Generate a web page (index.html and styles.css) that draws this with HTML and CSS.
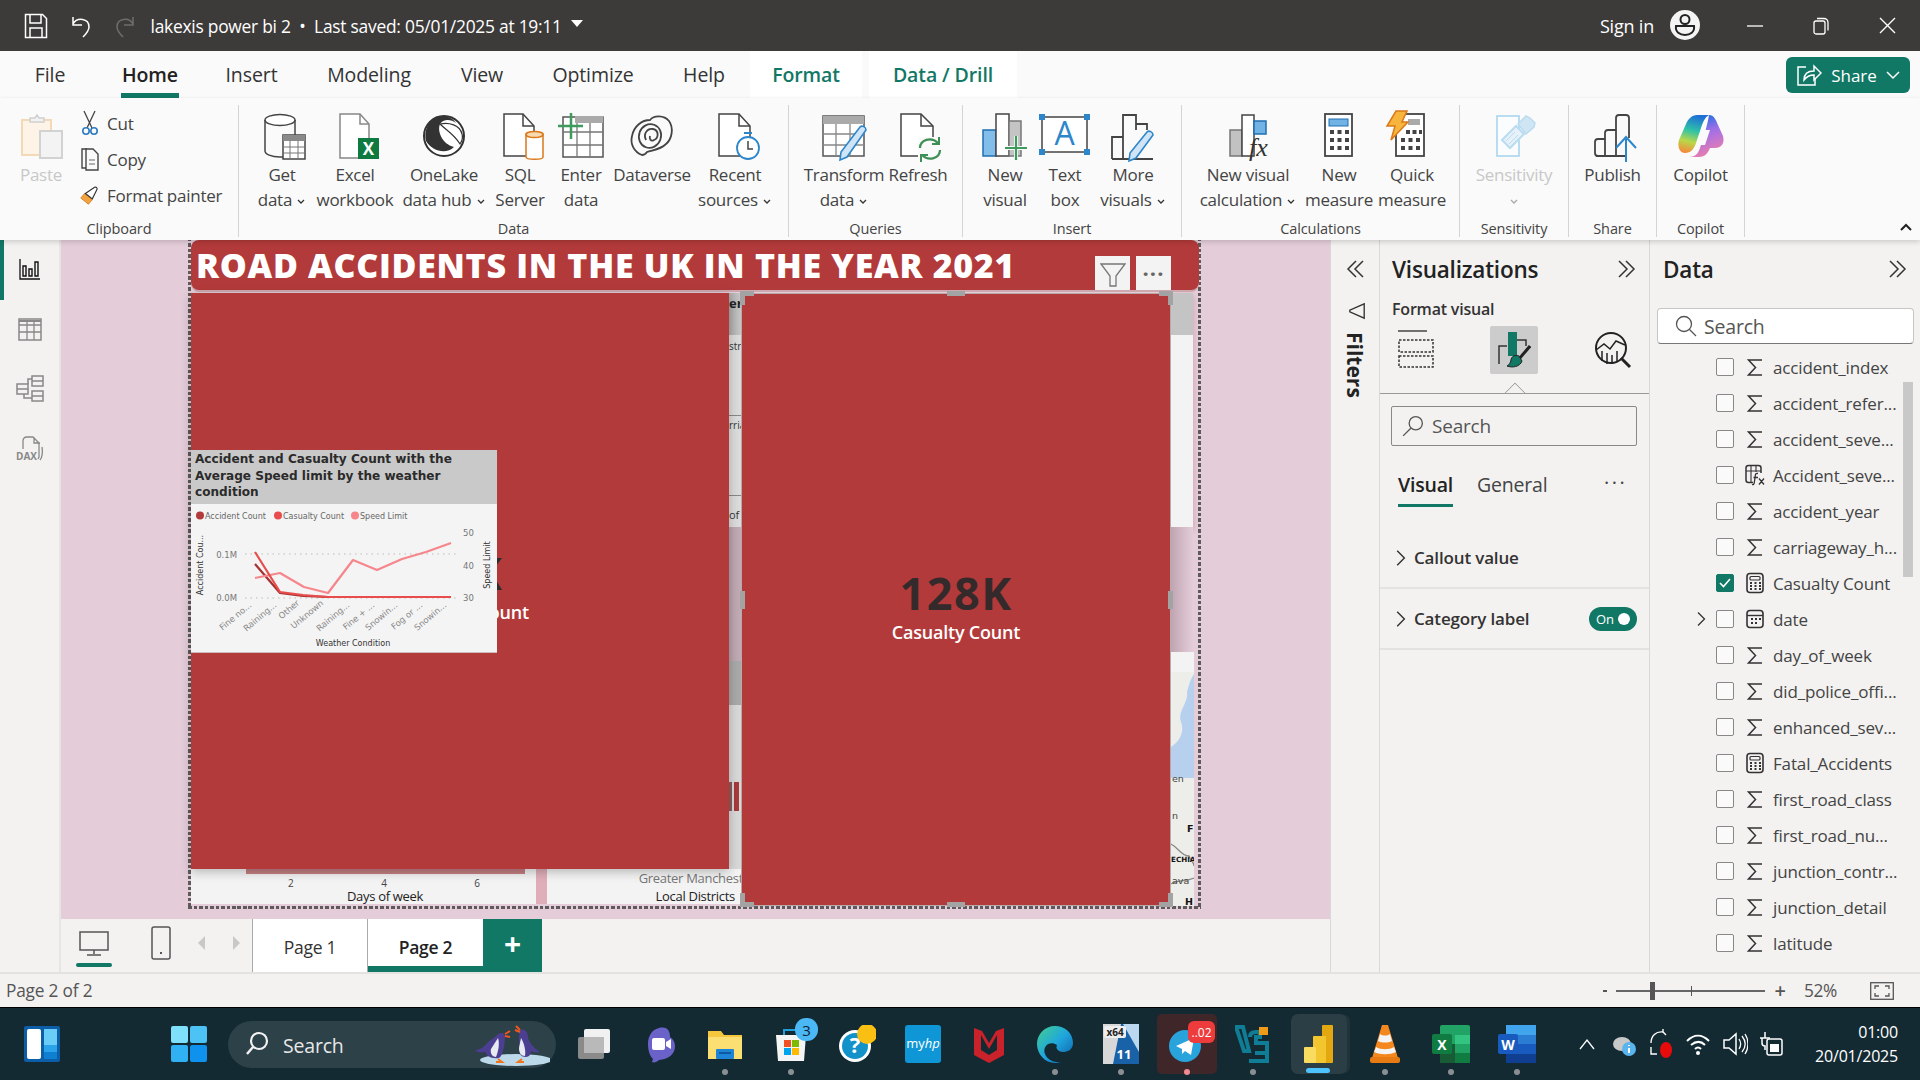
FILE: index.html
```html
<!DOCTYPE html>
<html lang="en">
<head>
<meta charset="utf-8">
<title>lakexis power bi 2</title>
<link rel="stylesheet" href="styles.css">
</head>
<body>
<svg class="defs" width="0" height="0">
  <symbol id="sigma" viewBox="0 0 22 22"><path d="M18 4H4.500l7 7.500-7 7.500H18" fill="none" stroke="#333" stroke-width="1.500"/></symbol>
  <symbol id="calc" viewBox="0 0 22 22"><rect x="3" y="1.500" width="16" height="19" rx="3" fill="none" stroke="#333" stroke-width="1.600"/><rect x="6" y="4.500" width="10" height="3.500" rx="1" fill="none" stroke="#333" stroke-width="1.200"/><path d="M6 11h2m2.500 0h2m2.500 0h2M6 14h2m2.500 0h2m2.500 0h2M6 17h2m2.500 0h2m2.500 0h2" stroke="#333" stroke-width="1.800"/></symbol>
  <symbol id="cal" viewBox="0 0 22 22"><rect x="3" y="2.500" width="16" height="17" rx="3" fill="none" stroke="#333" stroke-width="1.600"/><path d="M3 7.500h16" stroke="#333" stroke-width="1.400"/><path d="M7 11h2m2 0h2m2 0h2M7 15h2m2 0h2" stroke="#333" stroke-width="1.800"/></symbol>
  <symbol id="tfx" viewBox="0 0 22 22"><rect x="2" y="1.500" width="15" height="17" rx="2.500" fill="none" stroke="#333" stroke-width="1.500"/><path d="M7 2v16M12 2v6M2 7h15" stroke="#333" stroke-width="1.100"/><rect x="9" y="9" width="13" height="13" fill="#f3f2f1"/><path d="M14 9.500c-2-.5-2.500.5-2.700 2l-1 7c-.2 1.500-.8 2.500-2.300 2M9.500 13.500h4.500M15 14.500l5 6M20 14.500l-5 6" fill="none" stroke="#333" stroke-width="1.300"/></symbol>
  <symbol id="chev" viewBox="0 0 10 16"><path d="M2 1.500l6.500 6.500-6.500 6.500" fill="none" stroke="#333" stroke-width="1.300"/></symbol>
  <symbol id="dchev" viewBox="0 0 22 20"><path d="M3 2l8 8-8 8M10 2l8 8-8 8" fill="none" stroke="#333" stroke-width="1.500"/></symbol>
  <symbol id="down" viewBox="0 0 10 8"><path d="M2 2l3 3 3-3" fill="none" stroke="#333" stroke-width="1.300"/></symbol>
</svg>
<div class="app">
  <header class="titlebar">
    <div class="tb-left">
      <span class="tb-ic"><svg width="24" height="26" viewBox="0 0 24 26"><path d="M1.500 1.500h17l4 4v19h-21z" fill="none" stroke="#fff" stroke-width="1.500"/><path d="M6 2v8h11V2M6 24.500V15h12v9.500" fill="none" stroke="#fff" stroke-width="1.500"/></svg></span>
      <span class="tb-ic"><svg width="24" height="26" viewBox="0 0 24 26"><path d="M4 4v8h9M4 11c4-7 16-6 16 3 0 4-3 7-6 10" fill="none" stroke="#fff" stroke-width="1.500"/></svg></span>
      <span class="tb-ic"><svg width="24" height="26" viewBox="0 0 24 26"><path d="M20 4v8h-9M20 11c-4-7-16-6-16 3 0 4 3 7 6 10" fill="none" stroke="#6f6e6c" stroke-width="1.500"/></svg></span>
      <span class="tb-title">lakexis power bi 2 &nbsp;•&nbsp; Last saved: 05/01/2025 at 19:11</span>
      <span class="tb-tri"></span>
    </div>
    <div class="tb-right">
      <span class="signin">Sign in</span>
      <span class="avatar"><svg width="30" height="30" viewBox="0 0 30 30"><circle cx="15" cy="15" r="15" fill="#f4f4f4"/><circle cx="15" cy="9.500" r="4.500" fill="none" stroke="#222" stroke-width="2"/><path d="M6 16h18c1 6-4 9-9 9s-10-3-9-9z" fill="none" stroke="#222" stroke-width="2"/></svg></span>
      <span class="win"><svg width="16" height="16" viewBox="0 0 16 16"><path d="M0 8h16" stroke="#fff" stroke-width="1.300"/></svg></span>
      <span class="win"><svg width="16" height="18" viewBox="0 0 16 18"><rect x="1" y="4" width="11" height="13" rx="2" fill="none" stroke="#fff" stroke-width="1.300"/><path d="M4 1.500h7c2 0 4 1.500 4 4v8" fill="none" stroke="#fff" stroke-width="1.300"/></svg></span>
      <span class="win"><svg width="17" height="17" viewBox="0 0 17 17"><path d="M1 1l15 15M16 1L1 16" stroke="#fff" stroke-width="1.400"/></svg></span>
    </div>
  </header>

  <nav class="tabs">
    <span class="tab t-file">File</span>
    <span class="tab t-home active">Home</span>
    <span class="tab t-insert">Insert</span>
    <span class="tab t-model">Modeling</span>
    <span class="tab t-view">View</span>
    <span class="tab t-opt">Optimize</span>
    <span class="tab t-help">Help</span>
    <span class="tab ctx t-format">Format</span>
    <span class="tab ctx t-drill">Data / Drill</span>
    <span class="share"><svg width="26" height="24" viewBox="0 0 26 24"><path d="M10 4H2v18h17v-6" fill="none" stroke="#fff" stroke-width="1.500"/><path d="M8 17c0-6 4-9 10-9V3l7 7-7 7v-5c-4 0-7 1-10 5z" fill="none" stroke="#fff" stroke-width="1.500"/></svg><span class="share-t">Share</span><svg width="14" height="10" viewBox="0 0 14 10"><path d="M1 2l6 6 6-6" fill="none" stroke="#fff" stroke-width="1.500"/></svg></span>
  </nav>

  <section class="ribbon">
    <div class="group g-clip">
      <div class="clip-row">
        <div class="item i-paste disabled">
          <svg class="ri" width="48" height="48" viewBox="0 0 48 48"><rect x="5" y="8" width="29" height="35" fill="#fdf3e6" stroke="#f4d9b6" stroke-width="2"/><path d="M13 9V6h5l2-3 2 3h5v4H13z" fill="#f2f2f2" stroke="#cfcfcf" stroke-width="1.500"/><rect x="23" y="19" width="22" height="27" fill="#f3f3f3" stroke="#d2d2d2" stroke-width="2"/></svg>
          <span class="lbl">Paste</span>
        </div>
        <div class="clip-list">
          <div class="clip-i"><svg width="20" height="26" viewBox="0 0 20 26"><path d="M4 1l8 17M15 1L7 18" stroke="#444" stroke-width="1.300"/><circle cx="6" cy="21" r="3.200" fill="none" stroke="#2d7cc0" stroke-width="1.600"/><circle cx="14" cy="21" r="3.200" fill="none" stroke="#2d7cc0" stroke-width="1.600"/></svg><span>Cut</span></div>
          <div class="clip-i"><svg width="20" height="26" viewBox="0 0 20 26"><path d="M7 3H2v19h4" fill="none" stroke="#444" stroke-width="1.400"/><path d="M6 3h7l5 5v16H6z" fill="#fafafa" stroke="#444" stroke-width="1.400"/><path d="M9 14h6M9 18h6" stroke="#666"/></svg><span>Copy</span></div>
          <div class="clip-i"><svg width="26" height="26" viewBox="0 0 26 26"><path d="M6 11l10 8-5 6-10-8z" fill="#f3a33d" stroke="#c8741e"/><path d="M7 11L19 3c2-1 4 1 3 3l-6 12z" fill="#fff" stroke="#333" stroke-width="1.500"/></svg><span>Format painter</span></div>
        </div>
      </div>
      <span class="cap">Clipboard</span>
    </div>

    <div class="group g-data">
      <div class="items">
        <div class="item w64">
          <svg class="ri sh7" width="48" height="48" viewBox="0 0 48 48"><ellipse cx="15" cy="8" rx="15" ry="5.500" fill="#fff" stroke="#444" stroke-width="1.500"/><path d="M0 8v31c0 3 6 6 15 6h4M30 8v15" fill="none" stroke="#444" stroke-width="1.500"/><rect x="18" y="23" width="22" height="24" fill="#fff" stroke="#444" stroke-width="1.500"/><rect x="18" y="23" width="22" height="6" fill="#8a8a8a"/><path d="M18 35h22M18 41h22M25 29v18M33 29v18" stroke="#777"/></svg>
          <span class="lbl">Get<br>data <svg class="dn"><use href="#down"/></svg></span>
        </div>
        <div class="item w82">
          <svg class="ri" width="48" height="48" viewBox="0 0 48 48"><path d="M9 2h20l9 10v34H9z" fill="#fff" stroke="#888" stroke-width="1.500"/><path d="M29 2v10h9" fill="none" stroke="#888" stroke-width="1.500"/><rect x="27" y="26" width="21" height="21" fill="#0e7a3f"/><text class="gx" x="37.500" y="43">X</text></svg>
          <span class="lbl">Excel<br>workbook</span>
        </div>
        <div class="item w96">
          <svg class="ri" width="48" height="48" viewBox="0 0 48 48"><circle cx="24" cy="24" r="20" fill="#fff" stroke="#333" stroke-width="2"/><path d="M14 6c6-4 18-2 22 5-5-4-13-4-16 1-3 7 2 20 14 23-8 8-22 4-28-6C4 20 7 11 14 6z" fill="#333"/><path d="M20 12c9-2 20 1 22 10 1 3 0 7-2 10-6-10-14-14-20-20z" fill="#fff" stroke="#333" stroke-width="1.200"/></svg>
          <span class="lbl">OneLake<br>data hub <svg class="dn"><use href="#down"/></svg></span>
        </div>
        <div class="item w56">
          <svg class="ri" width="48" height="48" viewBox="0 0 48 48"><path d="M8 2h19l11 12v30H8z" fill="#fff" stroke="#444" stroke-width="1.500"/><path d="M27 2v12h11" fill="none" stroke="#444" stroke-width="1.500"/><path d="M30 22c0-2 17-2 17 0v23c0 3-17 3-17 0z" fill="#fff" stroke="#d9791a" stroke-width="1.500"/><ellipse cx="38.500" cy="22.500" rx="8.500" ry="3" fill="#f7d9b0" stroke="#d9791a" stroke-width="1.500"/></svg>
          <span class="lbl">SQL<br>Server</span>
        </div>
        <div class="item w66">
          <svg class="ri" width="48" height="48" viewBox="0 0 48 48"><rect x="6" y="5" width="40" height="40" fill="#fff" stroke="#555" stroke-width="1.500"/><rect x="18" y="4" width="28" height="7" fill="#aaa"/><path d="M6 20h40M6 33h40M20 11v34M33 11v34" stroke="#777" stroke-width="1.300"/><path d="M14 1v26M1 14h25" stroke="#3e9a5d" stroke-width="2.500"/></svg>
          <span class="lbl">Enter<br>data</span>
        </div>
        <div class="item w76">
          <svg class="ri" width="48" height="48" viewBox="0 0 48 48"><g fill="none" stroke="#444" stroke-width="1.800"><path d="M14 43C6 40 2 32 4 24 6 14 14 8 22 8c4-5 14-5 19 1 5 7 3 18-3 23-6 6-14 6-19 8-2 3-4 3-5 3z"/><ellipse cx="22" cy="24" rx="11" ry="12" transform="rotate(20 22 24)"/><path d="M18 28c-3-6 1-12 7-11 6 1 6 9 1 11-3 2-5-1-4-4"/></g></svg>
          <span class="lbl">Dataverse</span>
        </div>
        <div class="item w90">
          <svg class="ri" width="48" height="48" viewBox="0 0 48 48"><path d="M8 2h20l11 12v30H8z" fill="#fff" stroke="#444" stroke-width="1.500"/><path d="M28 2v12h11" fill="none" stroke="#444" stroke-width="1.500"/><circle cx="37" cy="36" r="11" fill="#fff" stroke="#2d86c9" stroke-width="1.800"/><path d="M37 29v8h5" fill="none" stroke="#444" stroke-width="1.500"/><path d="M33 21h8" stroke="#2d86c9" stroke-width="2"/></svg>
          <span class="lbl">Recent<br>sources <svg class="dn"><use href="#down"/></svg></span>
        </div>
      </div>
      <span class="cap">Data</span>
    </div>

    <div class="group g-query">
      <div class="items">
        <div class="item w90">
          <svg class="ri" width="48" height="48" viewBox="0 0 48 48"><rect x="3" y="4" width="41" height="40" fill="#fff" stroke="#555" stroke-width="1.500"/><rect x="3" y="4" width="41" height="8" fill="#aaa"/><path d="M3 22h41M3 33h41M16 12v32M30 12v32" stroke="#888" stroke-width="1.300"/><path d="M40 15c2-2 6 0 6 3L27 45l-7 3 1-8z" fill="#cfe4f6" stroke="#2d86c9" stroke-width="1.600"/></svg>
          <span class="lbl">Transform<br>data <svg class="dn"><use href="#down"/></svg></span>
        </div>
        <div class="item w58">
          <svg class="ri" width="48" height="48" viewBox="0 0 48 48"><path d="M7 2h20l12 12v30H7z" fill="#fff" stroke="#444" stroke-width="1.500"/><path d="M27 2v12h12" fill="none" stroke="#444" stroke-width="1.500"/><rect x="24" y="25" width="24" height="24" fill="#fafafa"/><path d="M26 36c0-8 11-12 18-5M46 38c0 8-11 12-18 5" fill="none" stroke="#3e8f55" stroke-width="2.200"/><path d="M45 25v7h-7M27 50v-7h7" fill="none" stroke="#3e8f55" stroke-width="2"/></svg>
          <span class="lbl">Refresh</span>
        </div>
      </div>
      <span class="cap">Queries</span>
    </div>

    <div class="group g-insert">
      <div class="items">
        <div class="item w60">
          <svg class="ri" width="48" height="48" viewBox="0 0 48 48"><rect x="2" y="18" width="13" height="26" fill="#83bdea" stroke="#1f6fb0" stroke-width="1.500"/><rect x="15" y="2" width="13" height="42" fill="#fff" stroke="#444" stroke-width="1.500"/><rect x="28" y="9" width="12" height="35" fill="#c4c4c4" stroke="#777" stroke-width="1.500"/><path d="M35 24v26M24 36h24" stroke="#fafafa" stroke-width="4"/><path d="M35 24v24M24 36h22" stroke="#3e9a5d" stroke-width="2.200"/></svg>
          <span class="lbl">New<br>visual</span>
        </div>
        <div class="item w60">
          <svg class="ri" width="48" height="48" viewBox="0 0 48 48"><rect x="1" y="5" width="45" height="35" fill="#fff" stroke="#444" stroke-width="1.500"/><path d="M-2 2h6v6h-6zM43 2h6v6h-6zM-2 37h6v6h-6zM43 37h6v6h-6z" fill="#2d86c9"/><text class="ta" x="23.500" y="33">A</text></svg>
          <span class="lbl">Text<br>box</span>
        </div>
        <div class="item w68 more">
          <svg class="ri" width="48" height="48" viewBox="0 0 48 48"><path d="M3 47V25h11M14 47V3h13v15M27 12h11v6M3 47h41" fill="none" stroke="#444" stroke-width="1.800"/><path d="M38 20c2-2 6 0 6 3L27 46l-7 3 1-8z" fill="#cfe4f6" stroke="#2d86c9" stroke-width="1.600"/></svg>
          <span class="lbl">More<br>visuals <svg class="dn"><use href="#down"/></svg></span>
        </div>
      </div>
      <span class="cap">Insert</span>
    </div>

    <div class="group g-calc">
      <div class="items">
        <div class="item w120">
          <svg class="ri" width="48" height="48" viewBox="0 0 48 48"><rect x="6" y="18" width="12" height="26" fill="#c2c2c2" stroke="#777" stroke-width="1.500"/><rect x="18" y="3" width="12" height="41" fill="#fff" stroke="#444" stroke-width="1.500"/><rect x="30" y="9" width="12" height="13" fill="#72b3e6" stroke="#1f6fb0" stroke-width="1.500"/><text class="fx" x="25" y="44">fx</text></svg>
          <span class="lbl">New visual<br>calculation <svg class="dn"><use href="#down"/></svg></span>
        </div>
        <div class="item w62">
          <svg class="ri" width="48" height="48" viewBox="0 0 48 48"><rect x="10" y="2" width="27" height="42" fill="#fff" stroke="#444" stroke-width="1.800"/><rect x="14" y="7" width="19" height="7" fill="#72b3e6" stroke="#1f6fb0"/><path d="M15 20h4m3.500 0h4m3.500 0h4M15 28h4m3.500 0h4m3.500 0h4M15 36h4m3.500 0h4m3.500 0h4" stroke="#444" stroke-width="4"/></svg>
          <span class="lbl">New<br>measure</span>
        </div>
        <div class="item w84">
          <svg class="ri shq" width="48" height="48" viewBox="0 0 48 48"><rect x="14" y="2" width="28" height="42" fill="#fff" stroke="#444" stroke-width="1.800"/><rect x="26" y="7" width="12" height="6" fill="#aaa"/><path d="M24 20h4m2.500 0h4m2.500 0h3M19 28h4m3.500 0h4m3.500 0h4M19 36h4m3.500 0h4m3.500 0h4" stroke="#444" stroke-width="4"/><path d="M14-1h11l-5 11h6L9 28l4-14H5z" fill="#f7b53d" stroke="#d9791a" stroke-width="1.500"/></svg>
          <span class="lbl">Quick<br>measure</span>
        </div>
      </div>
      <span class="cap">Calculations</span>
    </div>

    <div class="group g-sens">
      <div class="items">
        <div class="item wfull disabled">
          <svg class="ri" width="48" height="48" viewBox="0 0 48 48"><path d="M7 4h22v12L29 44H7z" fill="#fafcfe" stroke="#b9dcf0" stroke-width="2"/><path d="M12 28L26 14l8 8-14 14z" fill="#e6f1f9" stroke="#b9dcf0" stroke-width="2"/><path d="M16 29l9-9M19 32l9-9" stroke="#b9dcf0"/><path d="M28 12l8-8 4 2 5 5-1 4-8 7z" fill="#cfe5f3" stroke="#b9dcf0" stroke-width="1.500"/></svg>
          <span class="lbl">Sensitivity<br><svg class="dn dim"><use href="#down"/></svg></span>
        </div>
      </div>
      <span class="cap">Sensitivity</span>
    </div>

    <div class="group g-share">
      <div class="items">
        <div class="item wfull">
          <svg class="ri shp" width="48" height="48" viewBox="0 0 48 48"><path d="M6 44c-2 0-3-1-3-3V30c0-2 1-3 3-3h7v17zM13 44V21c0-2 1-3 3-3h8v26zM24 18V6c0-2 1-3 3-3h7c2 0 3 1 3 3v20M4 44h30" fill="none" stroke="#444" stroke-width="1.800"/><path d="M34 50V27M24 36l10-11 10 11" fill="none" stroke="#2d86c9" stroke-width="2"/></svg>
          <span class="lbl">Publish</span>
        </div>
      </div>
      <span class="cap">Share</span>
    </div>

    <div class="group g-copilot">
      <div class="items">
        <div class="item wfull">
          <svg class="ri" width="48" height="48" viewBox="0 0 48 48">
            <defs>
              <linearGradient id="cpA" x1="0.500" y1="0" x2="0.300" y2="1"><stop offset="0" stop-color="#1f6fd6"/><stop offset=".4" stop-color="#2fc2a8"/><stop offset=".7" stop-color="#b9d84a"/><stop offset="1" stop-color="#f58a3a"/></linearGradient>
              <linearGradient id="cpB" x1="0.400" y1="0" x2="0.700" y2="1"><stop offset="0" stop-color="#1f6fe0"/><stop offset=".4" stop-color="#a06fe8"/><stop offset="1" stop-color="#f47fa8"/></linearGradient>
            </defs>
            <path d="M20 3h12c-4 2-6 7-8 13l-5 15c-2 6-5 10-11 10C3 41 0 35 2 28l7-16c2-5 6-9 11-9z" fill="url(#cpA)"/>
            <path d="M32 3c5 0 7 5 9 10l5 11c2 8-2 12-8 12h-5c-2 5-5 9-11 9H12c6 0 9-3 11-9 1-2 7-20 9-33z" fill="url(#cpB)"/>
            <path d="M26 18h7l-5 15h-7z" fill="#fafafa"/>
          </svg>
          <span class="lbl">Copilot</span>
        </div>
      </div>
      <span class="cap">Copilot</span>
    </div>
    <svg class="collapse" width="14" height="10" viewBox="0 0 14 10"><path d="M2 8l5-5 5 5" fill="none" stroke="#222" stroke-width="2"/></svg>
  </section>

  <main class="main">
    <aside class="rail">
      <span class="rail-i on"><svg width="22" height="22" viewBox="0 0 22 22"><path d="M1 1v20h20" fill="none" stroke="#111" stroke-width="1.300"/><path d="M4 8h3v10H4zM10 11h3v7h-3zM16 4h3v14h-3z" fill="none" stroke="#111" stroke-width="1.400"/></svg></span>
      <span class="rail-i"><svg width="24" height="24" viewBox="0 0 24 24"><rect x="1" y="2" width="22" height="21" fill="none" stroke="#888" stroke-width="1.500"/><path d="M1 8h22M1 15h22M9 3v20M16 3v20" stroke="#888" stroke-width="1.300"/><path d="M1 4h22" stroke="#888" stroke-width="2"/></svg></span>
      <span class="rail-i"><svg width="28" height="28" viewBox="0 0 28 28"><g fill="none" stroke="#888" stroke-width="1.500"><rect x="1" y="9" width="11" height="10"/><rect x="16" y="1" width="11" height="10"/><rect x="16" y="16" width="11" height="10"/><path d="M1 14h11M16 6h11M16 21h11M12 9V4h4M8 19v4h8"/></g></svg></span>
      <span class="rail-i"><svg width="28" height="28" viewBox="0 0 28 28"><path d="M7 14V6c0-2 1-4 4-4h6l6 6v14l-1 2M18 2v6h6M26 12c1 5 0 11-2 13" fill="none" stroke="#888" stroke-width="1.300"/><text class="dax" x="0" y="25">DAX</text></svg></span>
    </aside>

    <div class="center">
      <div class="canvas">
        <div class="report">
          <div class="under gapcol">
            <div class="gc-head"></div>
            <div class="gc-list"><span class="gc-t gc-1">str</span><i class="gc-line"></i><span class="gc-t gc-2">rria</span><i class="gc-line l2"></i><span class="gc-t gc-3">of</span></div>
            <div class="gc-pink"></div>
            <div class="gc-grey"></div>
            <div class="gc-low"><i class="gc-bar"></i><i class="gc-bar b2"></i></div>
          </div>
          <span class="under gc-er">er</span>
          <div class="under rt-top"></div>
          <div class="under rt-pink"></div>
          <div class="under rt-map">
            <svg width="23" height="254" viewBox="0 0 23 254"><rect width="23" height="20" fill="#f3f3f3"/><rect y="20" width="23" height="234" fill="#ededea"/><path d="M23 22v104H0V95c8-5 14-15 10-25-4-10 8-20 6-30 2-8 4-14 7-18z" fill="#b7d0ee"/><path d="M0 192c8 4 10 12 18 12 2 6 5 6 5 10M0 232c6-4 12-2 23-6" fill="none" stroke="#8a8a86" stroke-width="1.300"/><text class="mp" x="1" y="130">en</text><text class="mp" x="1" y="167">n</text><text class="mp b" x="16" y="180">F</text><text class="mp b sm" x="0" y="210">ECHIA</text><text class="mp" x="1" y="232">ava</text><text class="mp b" x="14" y="253">H</text></svg>
          </div>
          <div class="under bt-left">
            <div class="bl-bar"></div>
            <div class="bl-ticks"><span>2</span><span>4</span><span>6</span></div>
            <div class="bl-name">Days of week</div>
          </div>
          <div class="under bt-pink"></div>
          <div class="under bt-mid">
            <div class="bm-a">Greater Manchester</div>
            <div class="bm-b">Local Districts</div>
          </div>

          <div class="banner">
            <h1 class="banner-t">ROAD ACCIDENTS IN THE UK IN THE YEAR 2021</h1>
            <span class="hdr-btn b1"><svg width="26" height="30" viewBox="0 0 26 30"><path d="M1 6h24l-9 12v10h-6V18z" fill="none" stroke="#777" stroke-width="1.300"/></svg></span>
            <span class="hdr-btn b2">···</span>
          </div>

          <div class="card card-l">
            <span class="frag-k">K</span>
            <span class="frag-o">ount</span>
          </div>
          <div class="card card-r">
            <div class="big">128K</div>
            <div class="big-cap">Casualty Count</div>
            <i class="h h-tl"></i><i class="h h-tr"></i><i class="h h-bl"></i><i class="h h-br"></i>
            <i class="h h-t"></i><i class="h h-b"></i><i class="h h-l"></i><i class="h h-r"></i>
          </div>

          <div class="chart">
            <div class="chart-h">Accident and Casualty Count with the Average Speed limit by the weather condition</div>
            <svg class="chart-s" width="306" height="148" viewBox="0 0 306 148">
              <g class="leg">
                <circle cx="9" cy="11.500" r="4" fill="#b33a3a"/><text x="14" y="14.500">Accident Count</text>
                <circle cx="87" cy="11.500" r="4" fill="#e84c4c"/><text x="92" y="14.500">Casualty Count</text>
                <circle cx="164" cy="11.500" r="4" fill="#f6868c"/><text x="169" y="14.500">Speed Limit</text>
              </g>
              <path d="M54 50H268M54 94H268" stroke="#bbb" stroke-dasharray="1.500 4"/>
              <g class="ax"><text x="46" y="54" text-anchor="end">0.1M</text><text x="46" y="97" text-anchor="end">0.0M</text><text x="272" y="32">50</text><text x="272" y="65">40</text><text x="272" y="97">30</text></g>
              <polyline points="64,60 89,89 112,92 137,93 260,93" class="ln l-a"/>
              <polyline points="64,74 89,69 113,83 137,89 162,56 186,66 211,55 235,48 260,39" class="ln l-s"/>
              <polyline points="64,48 89,88 112,91 137,93 162,93 260,93" class="ln l-c"/>
              <g class="xl">
                <text transform="translate(61,102) rotate(-40)">Fine no...</text>
                <text transform="translate(86,102) rotate(-40)">Raining...</text>
                <text transform="translate(109,100) rotate(-40)">Other</text>
                <text transform="translate(133,100) rotate(-40)">Unknown</text>
                <text transform="translate(159,102) rotate(-40)">Raining...</text>
                <text transform="translate(184,102) rotate(-40)">Fine + ...</text>
                <text transform="translate(207,102) rotate(-40)">Snowin...</text>
                <text transform="translate(232,102) rotate(-40)">Fog or ...</text>
                <text transform="translate(256,102) rotate(-40)">Snowin...</text>
              </g>
              <g class="tt">
                <text x="162" y="142" text-anchor="middle">Weather Condition</text>
                <text transform="translate(12,61) rotate(-90)" text-anchor="middle">Accident Cou...</text>
                <text transform="translate(299,61) rotate(-90)" text-anchor="middle">Speed Limit</text>
              </g>
            </svg>
          </div>
        </div>
      </div>
      <div class="pagebar">
        <div class="pb-dev">
          <span class="dev on"><svg width="30" height="28" viewBox="0 0 30 28"><rect x="1" y="3" width="28" height="18" fill="none" stroke="#555" stroke-width="1.500"/><path d="M15 21v4M8 26h14" stroke="#555" stroke-width="1.500"/></svg></span>
          <span class="dev d2"><svg width="20" height="34" viewBox="0 0 20 34"><rect x="1" y="1" width="18" height="32" rx="2" fill="none" stroke="#555" stroke-width="1.500"/><path d="M9 27h2" stroke="#555" stroke-width="2"/></svg></span>
        </div>
        <div class="pb-arrows"><span class="arr l"></span><span class="arr r"></span></div>
        <span class="page p1">Page 1</span>
        <span class="page p2">Page 2</span>
        <span class="page-add">+</span>
      </div>
    </div>

    <aside class="filters">
      <svg class="f-ch" width="22" height="20"><use href="#dchev" transform="translate(22,0) scale(-1,1)"/></svg>
      <svg class="f-fun" width="18" height="18" viewBox="0 0 20 20"><path d="M18 2v16L2 11V9z" fill="none" stroke="#333" stroke-width="1.500"/></svg>
      <span class="f-t">Filters</span>
    </aside>

    <aside class="viz">
      <div class="p-head"><span class="p-title">Visualizations</span><svg width="22" height="20"><use href="#dchev"/></svg></div>
      <div class="fmt-t">Format visual</div>
      <div class="fmt-ic">
        <span class="fi fi1"><svg width="36" height="38" viewBox="0 0 36 38"><path d="M0 1h29" stroke="#444" stroke-width="1.500"/><rect x="1" y="10" width="34" height="12" fill="none" stroke="#333" stroke-width="1.500" stroke-dasharray="2.500 1.500"/><rect x="1" y="26" width="34" height="11" fill="none" stroke="#333" stroke-width="1.500" stroke-dasharray="2.500 1.500"/></svg></span>
        <span class="fi fi2"><svg width="34" height="38" viewBox="0 0 34 38"><path d="M2 33V15h8" fill="none" stroke="#333" stroke-width="1.500"/><rect x="11" y="1" width="9" height="24" fill="#117865"/><path d="M20 9h9v6" fill="none" stroke="#333" stroke-width="1.500"/><path d="M33 15L22 28" stroke="#222" stroke-width="3"/><path d="M22 25c-4-2-8 1-8 4-.5 3-2 5-4 6 5 2 13 1 15-5z" fill="#117865" stroke="#222"/></svg></span>
        <span class="fi fi3"><svg width="38" height="38" viewBox="0 0 38 38"><circle cx="17" cy="17" r="15" fill="none" stroke="#222" stroke-width="2"/><path d="M2 19l8-6 6 5 6-8 9 4" fill="none" stroke="#222" stroke-width="1.500"/><path d="M8 20v10M13 22v11M18 24v9M23 20v11" stroke="#222" stroke-width="1.500"/><path d="M27 27l9 9" stroke="#222" stroke-width="3"/></svg></span>
      </div>
      <div class="fmt-line"><i class="caret"></i></div>
      <div class="v-search"><svg width="22" height="22" viewBox="0 0 20 20"><circle cx="12.500" cy="7.500" r="6" fill="none" stroke="#555" stroke-width="1.200"/><path d="M8 12l-7 7" stroke="#555" stroke-width="1.200"/></svg><span>Search</span></div>
      <div class="v-tabs"><span class="vt on">Visual</span><span class="vt">General</span><span class="vt-more">···</span></div>
      <div class="acc first"><svg class="ac-ch" width="11" height="18"><use href="#chev"/></svg><span>Callout value</span></div>
      <div class="acc"><svg class="ac-ch" width="11" height="18"><use href="#chev"/></svg><span>Category label</span><span class="toggle"><span class="tg-t">On</span><i class="tg-k"></i></span></div>
    </aside>

    <aside class="data">
      <div class="p-head d-head"><span class="p-title">Data</span><svg width="22" height="20"><use href="#dchev"/></svg></div>
      <div class="d-search"><svg width="22" height="22" viewBox="0 0 22 22"><circle cx="9" cy="9" r="7.500" fill="none" stroke="#555" stroke-width="1.300"/><path d="M14.500 14.500l6.500 6.500" stroke="#555" stroke-width="1.300"/></svg><span>Search</span></div>
      <div class="rows">
        <div class="row"><i class="cb"></i><svg class="ricon"><use href="#sigma"/></svg><span>accident_index</span></div>
        <div class="row"><i class="cb"></i><svg class="ricon"><use href="#sigma"/></svg><span>accident_refer...</span></div>
        <div class="row"><i class="cb"></i><svg class="ricon"><use href="#sigma"/></svg><span>accident_seve...</span></div>
        <div class="row"><i class="cb"></i><svg class="ricon"><use href="#tfx"/></svg><span>Accident_seve...</span></div>
        <div class="row"><i class="cb"></i><svg class="ricon"><use href="#sigma"/></svg><span>accident_year</span></div>
        <div class="row"><i class="cb"></i><svg class="ricon"><use href="#sigma"/></svg><span>carriageway_h...</span></div>
        <div class="row"><i class="cb ck"><svg width="14" height="12" viewBox="0 0 14 12"><path d="M2 6l3.500 3.500L12 2" fill="none" stroke="#fff" stroke-width="1.600"/></svg></i><svg class="ricon"><use href="#calc"/></svg><span>Casualty Count</span></div>
        <div class="row"><svg class="expand" width="10" height="16"><use href="#chev"/></svg><i class="cb"></i><svg class="ricon"><use href="#cal"/></svg><span>date</span></div>
        <div class="row"><i class="cb"></i><svg class="ricon"><use href="#sigma"/></svg><span>day_of_week</span></div>
        <div class="row"><i class="cb"></i><svg class="ricon"><use href="#sigma"/></svg><span>did_police_offi...</span></div>
        <div class="row"><i class="cb"></i><svg class="ricon"><use href="#sigma"/></svg><span>enhanced_sev...</span></div>
        <div class="row"><i class="cb"></i><svg class="ricon"><use href="#calc"/></svg><span>Fatal_Accidents</span></div>
        <div class="row"><i class="cb"></i><svg class="ricon"><use href="#sigma"/></svg><span>first_road_class</span></div>
        <div class="row"><i class="cb"></i><svg class="ricon"><use href="#sigma"/></svg><span>first_road_nu...</span></div>
        <div class="row"><i class="cb"></i><svg class="ricon"><use href="#sigma"/></svg><span>junction_contr...</span></div>
        <div class="row"><i class="cb"></i><svg class="ricon"><use href="#sigma"/></svg><span>junction_detail</span></div>
        <div class="row"><i class="cb"></i><svg class="ricon"><use href="#sigma"/></svg><span>latitude</span></div>
      </div>
      <i class="scroll"></i>
    </aside>
  </main>

  <footer class="status">
    <span class="st-l">Page 2 of 2</span>
    <div class="st-r">
      <span class="z-m"></span>
      <span class="z-track"><i class="z-thumb"></i><i class="z-tick"></i></span>
      <span class="z-p">+</span>
      <span class="z-v">52%</span>
      <svg class="z-fit" width="24" height="18" viewBox="0 0 24 18"><rect x=".7" y=".7" width="22.600" height="16.600" fill="none" stroke="#555" stroke-width="1.300"/><path d="M5 7V4h4M15 4h4v3M5 11v3h4M15 14h4v-3" fill="none" stroke="#555" stroke-width="1.300"/></svg>
    </div>
  </footer>

  <div class="taskbar">
    <span class="tk-w"><svg width="36" height="36" viewBox="0 0 36 36"><rect width="36" height="36" rx="2" fill="#0c5ea8"/><rect x="3" y="3" width="14" height="30" rx="2" fill="#fff"/><rect x="20" y="3" width="13" height="16" fill="#69cdf8"/><rect x="20" y="19" width="13" height="7" fill="#2aa3ea"/><rect x="20" y="26" width="13" height="7" fill="#0f7fd2"/></svg></span>
    <span class="tk-start"><svg width="36" height="36" viewBox="0 0 36 36"><rect width="17" height="17" rx="2" fill="#7fe0fb"/><rect x="19" width="17" height="17" rx="2" fill="#4cc2f5"/><rect y="19" width="17" height="17" rx="2" fill="#2fb1f3"/><rect x="19" y="19" width="17" height="17" rx="2" fill="#0f91ee"/></svg></span>
    <div class="tk-search">
      <svg width="24" height="26" viewBox="0 0 24 26"><circle cx="14" cy="10" r="8" fill="none" stroke="#f2f2f2" stroke-width="2.200"/><path d="M8 16l-6 7" stroke="#f2f2f2" stroke-width="2.500"/></svg>
      <span class="tk-st">Search</span>
      <svg class="peng" width="82" height="42" viewBox="0 0 82 42"><ellipse cx="48" cy="36" rx="36" ry="6" fill="#bcd9ea"/><path d="M28 12c3-4 9-4 9 0 0 8-2 20-6 22-8 1-12-2-14-6-4 1-8 0-10-2 6 0 10-4 13-8z" fill="#4c3f92"/><path d="M30 14c2 6 0 14-2 19-4 0-6-4-5-8z" fill="#e9e9f2"/><path d="M37 10l5-3M37 12l5 1" stroke="#f0571e" stroke-width="2"/><path d="M52 6c5-2 8 2 8 8 2 6 8 12 12 14-4 1-7 0-9-1 0 3-2 6-5 6-5 0-7-3-7-10 0-6 0-14 1-17z" fill="#4c3f92"/><path d="M53 14c3 5 5 12 4 18-4 0-6-3-6-8z" fill="#e9e9f2"/><path d="M52 6l-4-4M52 8l-5-2" stroke="#f0571e" stroke-width="2"/><path d="M30 35l4 3h-6M54 35l-4 3h6" stroke="#f0771e" stroke-width="2" fill="none"/></svg>
    </div>
    <div class="tk-apps">
      <span class="app-i"><svg width="36" height="36" viewBox="0 0 36 36"><rect x="3" y="11" width="26" height="22" rx="2" fill="#8a8a8a"/><rect x="9" y="3" width="26" height="24" rx="2" fill="#f1f1f1"/><rect x="9" y="11" width="20" height="16" fill="#b9b9b9"/></svg></span>
      <span class="app-i"><svg width="38" height="38" viewBox="0 0 38 38"><path d="M8 19C8 12 11 5 19 3c9-2 11 4 11 9 3 2 5 5 5 9 0 9-7 13-16 14-2 2-5 3-7 2l1-3c-3-3-5-8-5-15z" fill="#6a62c9"/><rect x="12" y="13" width="13" height="12" rx="2" fill="#fff"/><path d="M26 17l5-3v10l-5-3z" fill="#fff"/></svg></span>
      <span class="app-i dot"><svg width="38" height="38" viewBox="0 0 38 38"><path d="M2 6h13l3 4h18v24H2z" fill="#f5c73e"/><path d="M2 12h34v22H2z" fill="#fbdf72"/><rect x="10" y="24" width="18" height="10" rx="1" fill="#1d84d8"/><rect x="13" y="27" width="12" height="2" fill="#0d5aa0"/></svg></span>
      <span class="app-i dot"><svg width="38" height="38" viewBox="0 0 38 38"><path d="M4 10h30l-2 26H6z" fill="#f5f5f5"/><path d="M12 10V5h14v5" fill="none" stroke="#1d9fe0" stroke-width="2"/><rect x="12" y="15" width="7" height="7" fill="#f25022"/><rect x="20" y="15" width="7" height="7" fill="#7fba00"/><rect x="12" y="23" width="7" height="7" fill="#00a4ef"/><rect x="20" y="23" width="7" height="7" fill="#ffb900"/></svg><span class="badge b-blue">3</span></span>
      <span class="app-i"><svg width="38" height="38" viewBox="0 0 38 38"><circle cx="17" cy="21" r="16" fill="#fff"/><circle cx="17" cy="21" r="13" fill="#1392c9"/><text class="qm" x="17" y="28">?</text><circle cx="29" cy="9" r="10" fill="#f9bf12"/></svg></span>
      <span class="app-i"><svg width="36" height="38" viewBox="0 0 36 38"><rect width="36" height="38" rx="3" fill="#0e96d6"/><text class="myhp" x="18" y="23">my<tspan font-style="italic">hp</tspan></text></svg></span>
      <span class="app-i"><svg width="30" height="38" viewBox="0 0 30 38"><path d="M0 3l8 3 7 12 7-12 8-3v27l-15 8-15-8z" fill="#c9222a"/><path d="M7 10v15l8 5 8-5V10l-8 14z" fill="#132a32"/></svg></span>
      <span class="app-i dot"><svg width="36" height="38" viewBox="0 0 36 38"><defs><linearGradient id="edg" x1="0" y1="0" x2="1" y2="1"><stop offset="0" stop-color="#43d08f"/><stop offset=".5" stop-color="#1fa6dd"/><stop offset="1" stop-color="#0c5aa6"/></linearGradient></defs><path d="M18 1C28 1 36 8 36 18c0 7-6 9-10 9s-8-3-6-7c-7-5-15 1-12 9 2 5 8 9 16 8-3 1-5 1-6 1C8 38 0 29 0 19 0 9 8 1 18 1z" fill="url(#edg)"/></svg></span>
      <span class="app-i dot"><svg width="36" height="40" viewBox="0 0 36 40"><rect width="36" height="40" fill="#1a62a8"/><path d="M20 0h16v28z" fill="#bcd8f0"/><path d="M0 0h18l-8 40H0z" fill="#d8d8d8"/><rect x="1" y="2" width="22" height="12" rx="2" fill="#eee"/><text class="x64" x="12" y="12">x64</text><text class="x11" x="21" y="35">11</text></svg></span>
      <span class="app-i dot tg"><svg width="38" height="38" viewBox="0 0 38 38"><circle cx="17" cy="21" r="16" fill="#29a3dc"/><path d="M8 21l18-8-3 17-6-4-3 3v-5z" fill="#fff"/></svg><span class="badge b-red">..02</span></span>
      <span class="app-i dot"><svg width="36" height="38" viewBox="0 0 36 38"><path d="M1 2h7l6 24h-5zM14 36h18v-8H20M15 12c0-4 3-5 6-5h4v5h-4v6h11v10" fill="none" stroke="#0f7d96" stroke-width="4"/><path d="M24 2h9v8h-9z" fill="#f09a1a"/></svg></span>
      <span class="app-i pbi"><svg width="30" height="38" viewBox="0 0 30 38"><rect x="18" width="11" height="38" rx="1" fill="#e3a80f"/><rect x="9" y="11" width="13" height="27" rx="1" fill="#f3c62f"/><rect x="0" y="22" width="12" height="16" rx="1" fill="#f9dc5f"/></svg></span>
      <span class="app-i dot"><svg width="30" height="40" viewBox="0 0 30 40"><path d="M12 1h6l10 33H2z" fill="#f5871f"/><path d="M10 10c3 2 7 2 10 0l2 7c-4 2-10 2-14 0zM6 23c5 3 13 3 18 0l2 5c-6 3-16 3-22 0z" fill="#f4f4f4"/><rect y="33" width="30" height="6" rx="2" fill="#e87a14"/></svg></span>
      <span class="app-i dot"><svg width="38" height="38" viewBox="0 0 38 38"><rect x="8" width="30" height="38" rx="2" fill="#21a366"/><rect x="23" y="10" width="15" height="9" fill="#33c481"/><rect x="23" y="28" width="15" height="10" fill="#107c41"/><rect x="8" y="19" width="15" height="19" fill="#185c37"/><rect y="9" width="20" height="20" rx="2" fill="#107c41"/><text class="tw" x="10" y="25">X</text></svg></span>
      <span class="app-i dot"><svg width="38" height="38" viewBox="0 0 38 38"><rect x="8" width="30" height="38" rx="2" fill="#2b7cd3"/><rect x="8" width="30" height="10" fill="#41a5ee"/><rect x="8" y="19" width="30" height="10" fill="#185abd"/><rect x="8" y="29" width="30" height="9" fill="#103f91"/><rect y="9" width="20" height="20" rx="2" fill="#185abd"/><text class="tw" x="10" y="25">W</text></svg></span>
    </div>
    <div class="tk-tray">
      <span class="tr-i"><svg width="18" height="12" viewBox="0 0 18 12"><path d="M2 11l7-9 7 9" fill="none" stroke="#fff" stroke-width="1.300"/></svg></span>
      <span class="tr-i"><svg width="26" height="26" viewBox="0 0 26 26"><ellipse cx="11" cy="13" rx="9" ry="7" fill="#c8c8c8"/><circle cx="18" cy="18" r="7" fill="#5ab4ee"/><path d="M18 14v1M18 17v5" stroke="#fff" stroke-width="2"/></svg></span>
      <span class="tr-i"><svg width="26" height="30" viewBox="0 0 26 30"><path d="M3 14C3 7 8 2 15 3l3 3M3 18v7h6M15 3V0" fill="none" stroke="#fff" stroke-width="1.400"/><ellipse cx="18" cy="21" rx="6" ry="8" fill="#e80b0b"/></svg></span>
      <span class="tr-i"><svg width="26" height="24" viewBox="0 0 26 24"><path d="M2 9c7-7 15-7 22 0M6 13c5-4 10-4 14 0M10 17c2-2 4-2 6 0" fill="none" stroke="#fff" stroke-width="2"/><circle cx="13" cy="21" r="2" fill="#fff"/></svg></span>
      <span class="tr-i"><svg width="26" height="24" viewBox="0 0 26 24"><path d="M2 8h5l7-6v20l-7-6H2z" fill="none" stroke="#fff" stroke-width="1.500"/><path d="M17 7c2 3 2 7 0 10M20 4c4 5 4 11 0 16M23 2c4 6 4 14 0 20" fill="none" stroke="#fff" stroke-width="1.300"/></svg></span>
      <span class="tr-i"><svg width="26" height="26" viewBox="0 0 26 26"><path d="M6 1v6M1 7h10M3 7v5c0 2 1 3 3 3v4" fill="none" stroke="#fff" stroke-width="1.500"/><rect x="8" y="8" width="15" height="16" rx="2" fill="#132a32" stroke="#fff" stroke-width="1.500"/><rect x="11" y="13" width="9" height="8" fill="#fff"/></svg></span>
    </div>
    <div class="tk-clock"><span>01:00</span><span>20/01/2025</span></div>
  </div>
</div>
</body>
</html>
```
FILE: styles.css
```css
* { box-sizing: border-box; }
html, body { margin: 0; padding: 0; height: 100%; overflow: hidden; }
body { font-family: "Open Sans", "Noto Sans", sans-serif; color: #333; background: #f3f2f1; }
.defs { position: absolute; }
i { display: block; }
.app { width: 1920px; height: 1080px; display: flex; flex-direction: column; }

/* Title bar */
.titlebar { height: 51px; background: #3d3b39; color: #fff; display: flex; justify-content: space-between; align-items: center; flex: none; }
.tb-left { display: flex; align-items: center; padding-left: 14px; }
.tb-ic { width: 44.500px; display: flex; justify-content: center; }
.tb-title { margin-left: 3px; font-size: 17.400px; letter-spacing: -.25px; white-space: nowrap; }
.tb-tri { margin-left: 9px; margin-top: -4px; width: 0; height: 0; border-left: 6.500px solid transparent; border-right: 6.500px solid transparent; border-top: 7px solid #fff; }
.tb-right { display: flex; align-items: center; }
.signin { font-size: 18px; margin-right: 16px; letter-spacing: -.2px; }
.avatar { display: flex; margin-right: 22px; margin-top: -2px; }
.win { width: 66px; display: flex; justify-content: center; }

/* Tabs */
.tabs { height: 47px; background: #fafafa; display: flex; position: relative; flex: none; align-items: stretch; font-size: 19.500px; color: #333; }
.tab { display: flex; align-items: center; justify-content: center; padding-bottom: 1px; letter-spacing: -.1px; }
.t-file { width: 100px; }
.t-home { width: 100px; font-weight: 600; color: #222; position: relative; }
.t-insert { width: 103px; }
.t-model { width: 128px; margin-left: 2px; }
.t-view { width: 96px; margin-left: 1px; }
.t-opt { width: 126px; }
.t-help { width: 96px; margin-right: 1px; }
.active::after { content: ""; position: absolute; left: 21px; right: 21px; bottom: 0; height: 5px; background: #117865; }
.ctx { background: #fff; color: #117865; font-weight: 600; }
.t-format { width: 112px; margin-left: -3px; }
.t-drill { width: 148px; margin-left: 7px; }
.share { margin-left: auto; margin-right: 10px; margin-top: 6px; width: 124px; height: 36px; background: #117865; border-radius: 6px; color: #fff; display: flex; align-items: center; justify-content: center; gap: 9px; font-size: 17px; }

/* Ribbon */
.ribbon { height: 142px; background: #fafafa; display: flex; padding-top: 7px; padding-bottom: 3px; position: relative; z-index: 3; box-shadow: 0 2px 5px rgba(0,0,0,.16); flex: none; }
.group { display: flex; flex-direction: column; align-items: stretch; height: 132px; border-right: 1px solid #d4d4d4; flex: none; }
.g-clip { width: 239px; }
.g-data { width: 550px; }
.g-query { width: 174px; }
.g-insert { width: 219px; }
.g-calc { width: 278px; }
.g-sens { width: 109px; }
.g-share { width: 88px; }
.g-copilot { width: 88px; }
.items, .clip-row { display: flex; flex: 1; }
.g-data .items { padding-left: 11px; }
.g-query .items { padding-left: 10px; }
.g-insert .items { padding-left: 12px; }
.g-calc .items { padding-left: 6px; }
.item { display: flex; flex-direction: column; align-items: center; padding-top: 7px; flex: none; }
.w56 { width: 56px; } .w58 { width: 58px; } .w60 { width: 60px; } .w62 { width: 62px; } .w64 { width: 64px; } .w66 { width: 66px; } .w68 { width: 68px; } .w76 { width: 76px; } .w82 { width: 82px; } .w84 { width: 84px; } .w90 { width: 90px; } .w96 { width: 96px; } .w120 { width: 120px; }
.wfull { width: 100%; }
.more { margin-left: 4px; }
.ri { overflow: visible; flex: none; }
.sh7 { transform: translateX(7px); }
.shq { transform: translateX(-6px); }
.shp { transform: translateX(3px); }
.lbl { margin-top: 2px; font-size: 17px; line-height: 25px; text-align: center; white-space: nowrap; color: #444; letter-spacing: -.25px; }
.disabled .lbl { color: #c8c8c8; }
.dn { width: 10px; height: 8px; display: inline-block; }
.dim { opacity: .4; }
.cap { margin-top: auto; font-size: 14.500px; line-height: 16px; height: 16px; text-align: center; color: #444; letter-spacing: -.1px; }
.i-paste { width: 82px; }
.clip-list { display: flex; flex-direction: column; margin-left: -2px; }
.clip-i { display: flex; align-items: center; height: 36px; font-size: 17px; color: #444; gap: 7px; letter-spacing: -.25px; white-space: nowrap; }
.clip-i svg { flex: none; width: 20px; overflow: visible; }
.collapse { position: absolute; right: 7px; bottom: 8px; }

/* Main */
.main { height: 732px; display: flex; flex: none; }
.rail { width: 61px; background: #f3f2f1; border-right: 2px solid #e6e5e4; display: flex; flex-direction: column; align-items: center; flex: none; }
.rail-i { height: 60px; width: 100%; display: flex; align-items: center; justify-content: center; padding-bottom: 2px; }
.rail-i.on { box-shadow: inset 4px 0 0 #117865; }
.dax { font: 700 10px "Open Sans", sans-serif; fill: #888; }
.center { width: 1269px; display: flex; flex-direction: column; flex: none; }
.canvas { height: 679px; background: #e4cdd9; padding-left: 127px; overflow: hidden; }

/* Report page: a free canvas of visuals */
.report { position: relative; width: 1013px; height: 671px; margin-top: -2px;
  background:
    repeating-linear-gradient(90deg, #5e5a5c 0 3.500px, transparent 3.500px 5.500px) left bottom / 100% 3px no-repeat,
    repeating-linear-gradient(180deg, #5e5a5c 0 3.500px, transparent 3.500px 5.500px) left top / 3px 100% no-repeat,
    repeating-linear-gradient(180deg, #5e5a5c 0 3.500px, transparent 3.500px 5.500px) right top / 3px 100% no-repeat;
}
.under { position: absolute; }
.gapcol { left: 540px; top: 55px; width: 14px; height: 577px; display: flex; flex-direction: column; background: #d8d8d8; overflow: hidden; }
.gc-head { height: 42px; background: linear-gradient(90deg, #a9a9a9, #c9c9c9); }
.gc-list { height: 192px; background: #dcdcdc; position: relative; }
.gc-t { position: absolute; left: 1px; font-size: 10px; color: #333; line-height: 12px; }
.gc-1 { top: 5px; } .gc-2 { top: 84px; } .gc-3 { top: 174px; font-size: 11px; }
.gc-line { position: absolute; left: 0; right: 0; top: 80px; height: 1px; background: #888; }
.l2 { top: 160px; }
.gc-pink { height: 134px; background: linear-gradient(90deg, #b9a2ac, #c3acb6); }
.gc-grey { height: 44px; background: #a9a9a9; }
.gc-low { flex: 1; background: #d8d8d8; position: relative; }
.gc-bar { position: absolute; left: 1px; top: 77px; width: 3px; height: 29px; background: #8c5b5b; }
.b2 { left: 6px; width: 5px; background: #a83a3a; }
.gc-er { left: 541px; top: 57px; font-size: 13px; font-weight: 700; color: #222; line-height: 16px; }
.rt-top { left: 983px; top: 55px; width: 22px; height: 234px; background: linear-gradient(#c4c4c4 0 42px, #f3f3f3 42px); box-shadow: 0 3px 6px rgba(170,60,80,.35); }
.rt-pink { left: 983px; top: 289px; width: 22px; height: 125px; background: linear-gradient(90deg, #bfa5b1, #e4cdd9); }
.rt-map { left: 983px; top: 414px; width: 23px; height: 254px; overflow: hidden; }
.rt-map svg { display: block; }
.mp { font: 9.500px "DejaVu Sans", sans-serif; fill: #444; }
.mp.b { font-weight: 700; fill: #111; }
.mp.sm { font-size: 7.200px; }
.bt-left { left: 3px; top: 631px; width: 345px; height: 35px; background: #f3f3f3; }
.bl-bar { position: absolute; left: 55px; width: 279px; top: 0; height: 5px; background: #c47f82; }
.bl-ticks { position: absolute; left: 97px; top: 7px; width: 192px; display: flex; justify-content: space-between; font-size: 10px; line-height: 14px; color: #444; }
.bl-name { position: absolute; left: 0; width: 388px; top: 19px; text-align: center; font-size: 13px; line-height: 16px; color: #222; letter-spacing: -.3px; }
.bt-pink { left: 348px; top: 631px; width: 11px; height: 35px; background: #e0aeb8; }
.bt-mid { left: 359px; top: 631px; width: 194px; height: 35px; background: #f3f3f3; text-align: right; overflow: hidden; white-space: nowrap; }
.bm-a { font-size: 13px; line-height: 16px; margin-top: 1px; color: #777; margin-right: -14px; letter-spacing: -.3px; }
.bm-b { font-size: 13px; line-height: 16px; margin-top: 2px; margin-right: 6px; color: #222; letter-spacing: -.3px; }
.banner { position: absolute; left: 3px; top: 2px; width: 1008px; height: 50px; background: #b33a3a; border-radius: 8px; box-shadow: 0 2px 0 #cfa7af; display: flex; align-items: center; padding-left: 5px; }
.banner-t { margin: 0; font-family: "Open Sans", sans-serif; font-size: 34px; font-weight: 800; color: #fff; white-space: nowrap; letter-spacing: .7px; }
.hdr-btn { position: absolute; top: 16px; width: 35px; height: 34px; background: #f3f3f3; display: flex; align-items: center; justify-content: center; color: #666; }
.hdr-btn.b1 { left: 904px; }
.hdr-btn.b2 { left: 945px; font-size: 22px; font-weight: 700; letter-spacing: 1px; }
.card { position: absolute; background: #b33a3a; }
.card-l { left: 3px; top: 55px; width: 538px; height: 576px; box-shadow: 0 3px 10px rgba(0,0,0,.25); }
.frag-k { position: absolute; right: 227px; top: 252px; font-size: 45px; line-height: 56px; font-weight: 700; color: #342a2b; }
.frag-o { position: absolute; right: 200px; top: 306px; font-size: 18px; line-height: 26px; font-weight: 600; color: #fff; letter-spacing: -.2px; }
.card-r { left: 553px; top: 55px; width: 430px; height: 613px; border: 1px solid #b9a9a9; display: flex; flex-direction: column; align-items: center; justify-content: center; padding-top: 16px; }
.big { font-size: 45px; line-height: 46px; font-weight: 700; color: #342a2b; letter-spacing: 1.500px; }
.big-cap { margin-top: 3px; font-size: 18px; line-height: 26px; font-weight: 600; color: #fff; letter-spacing: -.2px; }
.h { position: absolute; background: #a3a3a3; }
.h-t, .h-b { width: 18px; height: 5px; left: calc(50% - 9px); }
.h-t { top: -3px; } .h-b { bottom: -2px; }
.h-l, .h-r { width: 5px; height: 18px; top: calc(50% - 9px); }
.h-l { left: -2px; } .h-r { right: -3px; }
.h-tl, .h-tr, .h-bl, .h-br { width: 14px; height: 14px; background: none; border: 0 solid #a3a3a3; }
.h-tl { left: -2px; top: -3px; border-width: 5px 0 0 5px; }
.h-tr { right: -3px; top: -3px; border-width: 5px 5px 0 0; }
.h-bl { left: -2px; bottom: -2px; border-width: 0 0 5px 5px; }
.h-br { right: -3px; bottom: -2px; border-width: 0 5px 5px 0; }

.chart { position: absolute; left: 3px; top: 212px; width: 306px; height: 202px; background: #f4f4f4; box-shadow: 0 1px 0 #cbb; }
.chart-h { height: 54px; background: #c9c9c9; padding: 1px 3px 0 4px; font-family: "DejaVu Sans", sans-serif; font-size: 12.100px; line-height: 16.500px; font-weight: 700; color: #2b2b2b; }
.chart-s { display: block; }
.chart-s text { font-family: "DejaVu Sans", sans-serif; font-size: 8px; }
.leg text { fill: #666; }
.ax text { fill: #777; font-size: 8.500px !important; }
.xl text { fill: #888; text-anchor: end; font-size: 8.500px !important; }
.tt text { fill: #333; }
.ln { fill: none; stroke-width: 2.200; stroke-linejoin: round; }
.l-a { stroke: #a83232; }
.l-c { stroke: #e84c4c; }
.l-s { stroke: #f6868c; }

/* Page tabs */
.pagebar { height: 53px; background: #f3f2f1; display: flex; align-items: stretch; }
.pb-dev { display: flex; width: 133px; padding-left: 15px; }
.dev { width: 36px; height: 53px; display: flex; align-items: center; justify-content: center; padding-bottom: 6px; position: relative; }
.dev.on::after { content: ""; position: absolute; left: 0; right: 0; bottom: 5px; height: 4px; border-radius: 2px; background: #117865; }
.d2 { margin-left: 31px; }
.pb-arrows { width: 58px; display: flex; align-items: center; justify-content: space-between; padding: 0 12px 5px 4px; }
.arr { width: 0; height: 0; border-top: 7px solid transparent; border-bottom: 7px solid transparent; }
.arr.l { border-right: 7px solid #c9c8c7; }
.arr.r { border-left: 7px solid #c9c8c7; }
.page { background: #fff; display: flex; align-items: center; justify-content: center; font-size: 17.500px; letter-spacing: -.3px; color: #333; border-left: 1px solid #aaa; padding-top: 2px; }
.p1 { width: 115px; }
.p2 { width: 116px; font-weight: 600; box-shadow: inset 0 -6px 0 #117865; color: #222; }
.page-add { width: 59px; background: #117865; color: #fff; font-size: 30px; font-weight: 700; display: flex; align-items: center; justify-content: center; padding-bottom: 4px; }

/* Side panels */
.filters { width: 49px; background: #f3f2f1; border-left: 1px solid #d9d8d7; display: flex; flex-direction: column; align-items: center; padding-top: 19px; flex: none; }
.f-ch { overflow: visible; }
.f-fun { margin-top: 23px; margin-left: 3px; }
.f-t { margin-top: 12px; writing-mode: vertical-rl; font-size: 21px; line-height: 24px; font-weight: 700; color: #222; }
.viz { width: 270px; background: #f3f2f1; border-left: 1px solid #d9d8d7; flex: none; }
.p-head { height: 40px; margin-top: 9px; padding: 0 11px 0 12px; display: flex; align-items: center; justify-content: space-between; }
.p-title { font-size: 22.500px; font-weight: 600; color: #222; letter-spacing: -.2px; }
.fmt-t { margin: 8px 0 0 12px; font-size: 16px; line-height: 24px; font-weight: 600; color: #333; letter-spacing: -.2px; }
.fmt-ic { position: relative; height: 48px; margin-top: 5px; }
.fi { position: absolute; top: 0; height: 48px; display: flex; align-items: center; justify-content: center; }
.fi1 { left: 17px; width: 38px; padding-bottom: 3px; }
.fi2 { left: 110px; width: 48px; background: #ccc; border-radius: 2px; }
.fi3 { left: 213px; width: 40px; }
.fmt-line { height: 1px; margin-top: 19px; background: #999; position: relative; }
.caret { position: absolute; left: 127px; top: -8px; width: 16px; height: 16px; background: #f3f2f1; border-left: 1px solid #999; border-top: 1px solid #999; transform: rotate(45deg) scale(.95); clip-path: polygon(0 0, 100% 0, 0 100%); }
.v-search { margin: 12px 12px 0 11px; height: 40px; border: 1px solid #8a8886; border-radius: 2px; display: flex; align-items: center; gap: 8px; padding-left: 10px; font-size: 19px; color: #555; letter-spacing: -.2px; }
.v-tabs { display: flex; margin: 19px 0 0 18px; position: relative; height: 39px; align-items: flex-start; font-size: 19.500px; color: #444; letter-spacing: -.2px; }
.vt { line-height: 39px; height: 39px; margin-right: 24px; }
.vt.on { color: #222; font-weight: 600; box-shadow: 0 3px 0 #117865; }
.vt-more { position: absolute; left: 206px; top: 0; line-height: 36px; font-size: 20px; font-weight: 400; letter-spacing: 2.500px; }
.acc { position: relative; height: 61px; border-bottom: 2px solid #e3e2e1; display: flex; align-items: center; padding-left: 15px; gap: 8px; font-size: 17px; font-weight: 600; color: #333; letter-spacing: -.15px; }
.acc.first { margin-top: 24px; }
.ac-ch { flex: none; }
.toggle { position: absolute; right: 12px; top: 18px; width: 48px; height: 24px; border-radius: 12px; background: #117865; color: #fff; font-size: 13px; font-weight: 400; display: flex; align-items: center; padding-left: 7px; }
.tg-k { position: absolute; right: 7px; top: 6px; width: 12px; height: 12px; border-radius: 50%; background: #fff; }
.data { width: 271px; background: #f3f2f1; border-left: 1px solid #d9d8d7; position: relative; flex: none; overflow: hidden; }
.d-head { padding-left: 13px; padding-right: 11px; }
.d-search { margin: 19px 6px 0 7px; height: 36px; background: #fff; border: 1px solid #c8c6c4; border-bottom: 1.500px solid #777; border-radius: 4px; display: flex; align-items: center; gap: 7px; padding-left: 17px; font-size: 19.500px; color: #555; letter-spacing: -.2px; }
.rows { margin-top: 5px; padding-left: 66px; }
.row { height: 36px; display: flex; align-items: center; position: relative; font-size: 17px; color: #444; white-space: nowrap; letter-spacing: -.15px; }
.cb { width: 18px; height: 18px; border: 1px solid #8a8886; border-radius: 2px; background: #fafafa; flex: none; display: flex; align-items: center; justify-content: center; }
.ck { background: #117865; border-color: #117865; }
.ricon { width: 22px; height: 22px; margin-left: 10px; margin-right: 7px; flex: none; }
.expand { position: absolute; left: -20px; top: 10px; }
.scroll { position: absolute; left: 253px; top: 142px; width: 10px; height: 195px; background: #c8c8c8; }

/* Status */
.status { height: 35px; background: #f3f2f1; border-top: 2px solid #e3e2e1; display: flex; align-items: center; justify-content: space-between; padding: 0 26px 0 6px; flex: none; font-size: 17.300px; color: #555; }
.st-l { letter-spacing: -.2px; }
.st-r { display: flex; align-items: center; }
.z-m { width: 4px; height: 2px; background: #555; margin-right: 9px; }
.z-track { width: 149px; height: 2px; background: #666; position: relative; }
.z-thumb { position: absolute; left: 34px; top: -8px; width: 5px; height: 18px; background: #555; }
.z-tick { position: absolute; left: 75px; top: -4px; width: 1px; height: 10px; background: #555; }
.z-p { margin-left: 10px; font-size: 20px; line-height: 20px; color: #555; font-weight: 600; }
.z-v { margin-left: 18px; width: 55px; letter-spacing: -.4px; }
.z-fit { margin-left: 11px; }

/* Taskbar */
.taskbar { height: 73px; flex: none; background: #132a32; display: flex; align-items: center; position: relative; border-top: 1px solid #000; color: #fff; }
.tk-w { margin-left: 24px; display: flex; }
.tk-start { margin-left: 111px; display: flex; }
.tk-search { margin-left: 21px; width: 328px; height: 47px; background: #2c4148; border-radius: 24px; display: flex; align-items: center; padding-left: 17px; position: relative; }
.tk-st { margin-left: 14px; padding-top: 2px; font-size: 19.500px; color: #e8e8e8; letter-spacing: -.2px; }
.peng { position: absolute; right: 6px; top: 3px; }
.tk-apps { display: flex; margin-left: 4px; width: 990px; flex: none; }
.app-i { width: 66px; height: 60px; display: flex; align-items: center; justify-content: center; position: relative; flex: none; }
.app-i.dot::after { content: ""; position: absolute; left: 30px; bottom: -1px; width: 6px; height: 6px; border-radius: 50%; background: #8a8f92; }
.tg { background: #3f2729; border-radius: 5px; width: 60px; margin: 0 3px; }
.tg.dot::after { background: #f08c94; left: 27px; }
.pbi { background: #2b3e46; border-radius: 7px; width: 56px; margin: 0 5px; box-shadow: 4px 0 0 -1px #22343b; }
.pbi::after { content: ""; position: absolute; left: 15px; bottom: 1px; width: 24px; height: 5px; border-radius: 3px; background: #4cc2ff; }
.badge { position: absolute; border-radius: 11px; display: flex; align-items: center; justify-content: center; }
.b-blue { right: 6px; top: 4px; width: 23px; height: 23px; background: #4cb7f5; color: #123; font-size: 15px; }
.b-red { right: 2px; top: 7px; width: 27px; height: 22px; background: #ee3b3b; color: #fff; font-size: 12px; border-radius: 6px; }
.gx { font: 700 17px "Open Sans", sans-serif; fill: #fff; text-anchor: middle; }
.ta { font: 400 32px "Open Sans", sans-serif; fill: #2d86c9; text-anchor: middle; }
.fx { font: italic 26px "Liberation Serif", serif; fill: #333; }
.qm { font: 700 22px "Open Sans", sans-serif; fill: #fff; text-anchor: middle; }
.myhp { font: 13px "Open Sans", sans-serif; fill: #fff; text-anchor: middle; }
.x64 { font: 700 10px "Open Sans", sans-serif; fill: #222; text-anchor: middle; }
.x11 { font: 700 13px "Open Sans", sans-serif; fill: #fff; text-anchor: middle; }
.tw { font: 700 14px "Open Sans", sans-serif; fill: #fff; text-anchor: middle; }
.tk-tray { display: flex; margin-left: 18px; align-items: center; flex: none; }
.tr-i { width: 37px; display: flex; justify-content: center; }
.tk-clock { margin-left: auto; padding-right: 22px; display: flex; flex-direction: column; align-items: flex-end; gap: 2px; font-size: 16px; line-height: 22px; color: #fff; letter-spacing: -.2px; }
```
